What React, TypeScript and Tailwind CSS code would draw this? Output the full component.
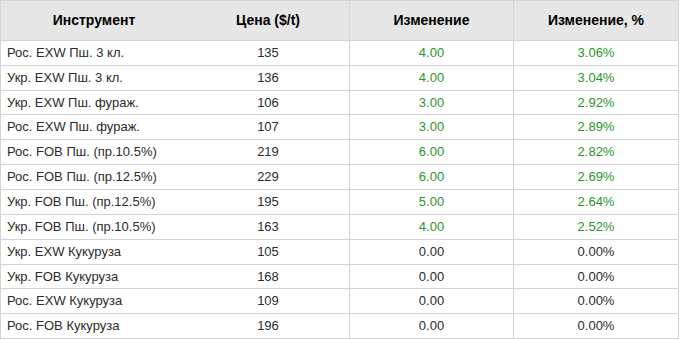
import React from 'react';

interface Row {
  name: string;
  price: number;
  change: string;
  pct: string;
  h: string;
}

const rows: Row[] = [
  { name: 'Рос. EXW Пш. 3 кл.', price: 135, change: '4.00', pct: '3.06%', h: 'h-[25px]' },
  { name: 'Укр. EXW Пш. 3 кл.', price: 136, change: '4.00', pct: '3.04%', h: 'h-[25px]' },
  { name: 'Укр. EXW Пш. фураж.', price: 106, change: '3.00', pct: '2.92%', h: 'h-[24px]' },
  { name: 'Рос. EXW Пш. фураж.', price: 107, change: '3.00', pct: '2.89%', h: 'h-[25px]' },
  { name: 'Рос. FOB Пш. (пр.10.5%)', price: 219, change: '6.00', pct: '2.82%', h: 'h-[25px]' },
  { name: 'Рос. FOB Пш. (пр.12.5%)', price: 229, change: '6.00', pct: '2.69%', h: 'h-[25px]' },
  { name: 'Укр. FOB Пш. (пр.12.5%)', price: 195, change: '5.00', pct: '2.64%', h: 'h-[25px]' },
  { name: 'Укр. FOB Пш. (пр.10.5%)', price: 163, change: '4.00', pct: '2.52%', h: 'h-[25px]' },
  { name: 'Укр. EXW Кукуруза', price: 105, change: '0.00', pct: '0.00%', h: 'h-[25px]' },
  { name: 'Укр. FOB Кукуруза', price: 168, change: '0.00', pct: '0.00%', h: 'h-[24px]' },
  { name: 'Рос. EXW Кукуруза', price: 109, change: '0.00', pct: '0.00%', h: 'h-[25px]' },
  { name: 'Рос. FOB Кукуруза', price: 196, change: '0.00', pct: '0.00%', h: 'h-[24px]' },
];

export default function App() {
  return (
    <div className="w-[680px] h-[340px] bg-white font-['Liberation_Sans',Arial,sans-serif] text-[13px]">
      <div className="w-[679px] border border-[#d4d4d4] divide-y divide-[#d4d4d4]">
        <div className="grid grid-cols-[186px_162px_164px_165px] h-[40px] bg-[#e6e6e6] font-bold text-[14px] text-black">
          <div className="flex items-center justify-center">Инструмент</div>
          <div className="flex items-center justify-center">Цена ($/t)</div>
          <div className="flex items-center justify-center border-l border-[#d4d4d4]">Изменение</div>
          <div className="flex items-center justify-center border-l border-[#d4d4d4]">Изменение, %</div>
        </div>
        {rows.map(r => {
          const up = r.change !== '0.00';
          const tone = up ? 'text-[#2a962a]' : 'text-[#2b2b2b]';
          return (
            <div key={r.name} className={`grid grid-cols-[186px_162px_164px_165px] ${r.h} text-[#2b2b2b]`}>
              <div className="flex items-center pl-[6px]">{r.name}</div>
              <div className="flex items-center justify-center">{r.price}</div>
              <div className={`flex items-center justify-center border-l border-[#d4d4d4] ${tone}`}>{r.change}</div>
              <div className={`flex items-center justify-center border-l border-[#d4d4d4] ${tone}`}>{r.pct}</div>
            </div>
          );
        })}
      </div>
    </div>
  );
}
